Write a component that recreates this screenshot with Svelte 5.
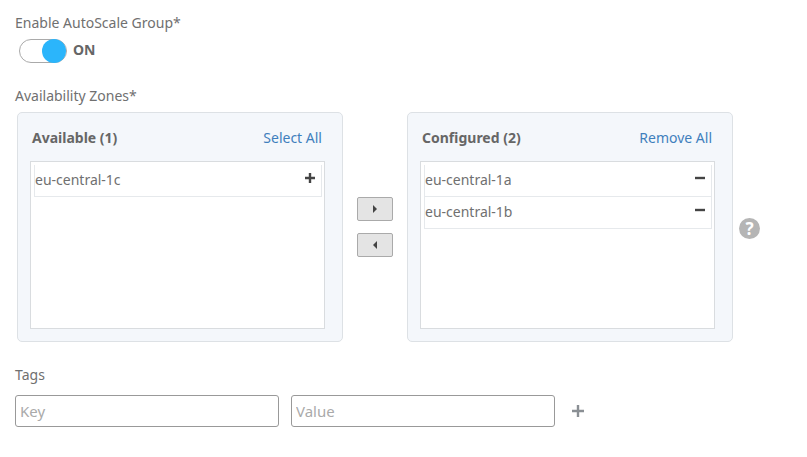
<script>
    let available = ['eu-central-1c'];
    let configured = ['eu-central-1a', 'eu-central-1b'];
</script>

<div class="page">
    <div class="label">Enable AutoScale Group*</div>
    <div class="toggle-row">
        <span class="toggle"><span class="knob"></span></span>
        <span class="toggle-text">ON</span>
    </div>

    <div class="label zones-label">Availability Zones*</div>
    <div class="zones">
        <div class="panel">
            <div class="panel-head">
                <span class="panel-title">Available ({available.length})</span>
                <a href="#select" class="panel-link">Select All</a>
            </div>
            <div class="list">
                {#each available as zone}
                    <div class="row">
                        <span>{zone}</span>
                        <svg class="sign" width="12" height="12" viewBox="0 0 12 12"><path d="M1 6h10M6 1v10" stroke="#444" stroke-width="2.4" /></svg>
                    </div>
                {/each}
            </div>
        </div>

        <div class="arrows">
            <button class="arrow" aria-label="Add">
                <svg width="6" height="10" viewBox="0 0 6 10"><path d="M1 1l4 4-4 4z" fill="#444" /></svg>
            </button>
            <button class="arrow" aria-label="Remove">
                <svg width="6" height="10" viewBox="0 0 6 10"><path d="M5 1L1 5l4 4z" fill="#444" /></svg>
            </button>
        </div>

        <div class="panel">
            <div class="panel-head">
                <span class="panel-title">Configured ({configured.length})</span>
                <a href="#remove" class="panel-link">Remove All</a>
            </div>
            <div class="list">
                {#each configured as zone}
                    <div class="row">
                        <span>{zone}</span>
                        <svg class="sign" width="12" height="12" viewBox="0 0 12 12"><path d="M1 6h10" stroke="#444" stroke-width="2.4" /></svg>
                    </div>
                {/each}
            </div>
        </div>

        <div class="help">?</div>
    </div>

    <div class="label tags-label">Tags</div>
    <div class="tags">
        <input class="tag-input" placeholder="Key" />
        <input class="tag-input" placeholder="Value" />
        <svg class="tag-plus" width="14" height="14" viewBox="0 0 14 14"><path d="M1 7h12M7 1v12" stroke="#8a8f94" stroke-width="2.4" /></svg>
    </div>
</div>

<style>
    :global(body) {
        background: #fff;
    }

    .page {
        width: 807px;
        height: 457px;
        box-sizing: border-box;
        padding: 14px 0 0 15px;
        font-family: "Noto Sans", "Open Sans", sans-serif;
        font-size: 14px;
        color: #707070;
    }

    .label {
        line-height: 18px;
    }

    .toggle-row {
        display: flex;
        align-items: center;
        gap: 6px;
        margin: 7px 0 0 4px;
    }

    .toggle {
        display: flex;
        justify-content: flex-end;
        width: 48px;
        height: 24px;
        box-sizing: border-box;
        border: 1px solid #aaa;
        border-radius: 12px;
        background: #fff;
    }

    .knob {
        width: 24px;
        height: 24px;
        margin: -1px 0 0;
        border-radius: 50%;
        background: #2bb5fb;
    }

    .toggle-text {
        font-weight: 700;
        color: #666;
        line-height: 22px;
        padding-bottom: 2px;
    }

    .zones-label {
        margin-top: 24px;
    }

    .zones {
        display: flex;
        align-items: flex-start;
        margin: 7px 0 0 2px;
    }

    .panel {
        width: 326px;
        height: 230px;
        box-sizing: border-box;
        padding: 0 17px 0 12px;
        border: 1px solid #dde1e5;
        border-radius: 5px;
        background: #f4f7fb;
    }

    .panel-head {
        display: flex;
        justify-content: space-between;
        align-items: center;
        height: 48px;
        padding: 0 3px 0 2px;
    }

    .panel-title {
        font-weight: 700;
        color: #666;
    }

    .panel-link {
        color: #3f7fbd;
        text-decoration: none;
    }

    .list {
        width: 295px;
        height: 168px;
        box-sizing: border-box;
        padding: 3px 2px 0 3px;
        border: 1px solid #d9dcdf;
        background: #fff;
    }

    .row {
        display: flex;
        justify-content: space-between;
        align-items: center;
        height: 32px;
        padding-bottom: 2px;
        box-sizing: border-box;
        border: solid #e6e9ec;
        border-width: 0 1px 1px;
    }

    .sign {
        margin: -4px 5px 0 0;
    }

    .arrows {
        display: flex;
        flex-direction: column;
        gap: 12px;
        width: 36px;
        margin: 85px 14px 0 14px;
    }

    .arrow {
        display: flex;
        align-items: center;
        justify-content: center;
        width: 36px;
        height: 24px;
        padding: 0;
        border: 1px solid #aaa;
        border-radius: 2px;
        background: #e4e4e4;
    }

    .help {
        width: 21px;
        height: 21px;
        margin: 106px 0 0 6px;
        border-radius: 50%;
        background: #b5b5b5;
        color: #fff;
        font-weight: 700;
        font-size: 17px;
        line-height: 21px;
        text-align: center;
    }

    .tags-label {
        margin-top: 24px;
    }

    .tags {
        display: flex;
        align-items: center;
        gap: 12px;
        margin-top: 11px;
    }

    .tag-input {
        width: 264px;
        height: 32px;
        box-sizing: border-box;
        padding: 0 4px;
        border: 1px solid #999;
        border-radius: 3px;
        outline: none;
        font: inherit;
        font-size: 15px;
    }

    .tag-input::placeholder {
        color: #aaa;
    }

    .tag-plus {
        margin-left: 4px;
    }
</style>
